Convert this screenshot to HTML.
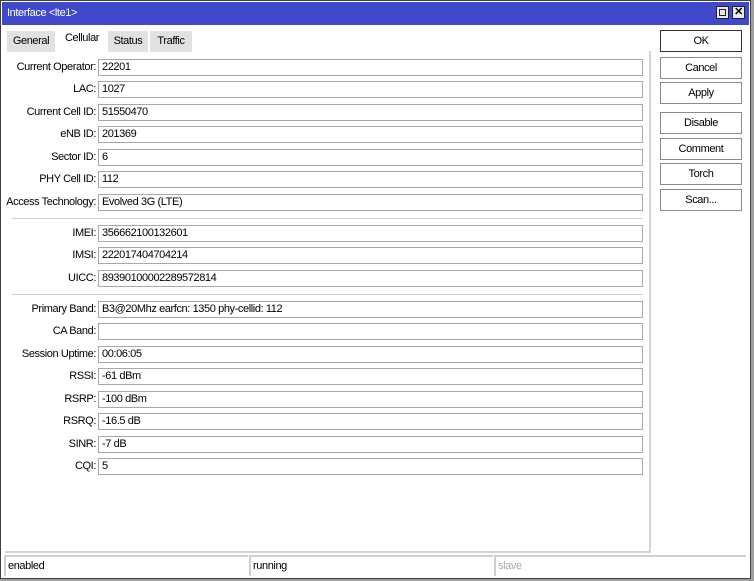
<!DOCTYPE html>
<html><head><style>
*{margin:0;padding:0;box-sizing:border-box}
body{width:754px;height:581px;background:#a0a0a0;font-family:"Liberation Sans",sans-serif;font-size:11px;letter-spacing:-0.4px;color:#000;position:relative;overflow:hidden}
.win{position:absolute;left:0;top:0;width:751px;height:579px;background:#fff;border:1px solid #404040}
.title{position:absolute;left:1px;top:1px;width:747px;height:23px;background:#3f49c9;color:#fff;font-size:11px;line-height:23px;padding-left:5px}
.tb{position:absolute;top:5px;width:13px;height:13px;background:#e8e8e8;border:1px solid #222}
.tabs{position:absolute;left:6px;top:30px;height:21px}
.tab{position:absolute;top:0;height:21px;background:#e1e1e1;line-height:21px;text-align:center}
.panel{position:absolute;left:5px;top:51px;width:646px;height:502px;border-right:2px solid #d4d4d4;border-bottom:2px solid #d4d4d4}
.l{position:absolute;right:658px;text-align:right;white-space:nowrap;line-height:17px}
.f{position:absolute;left:98px;width:545px;height:17px;border:1px solid #a8a8a8;line-height:15px;padding-left:3px;background:#fff}
.sep{position:absolute;left:12px;width:631px;height:1px;background:#d0d0d0}
.b{position:absolute;left:660px;width:82px;height:22px;border:1px solid #8a8a8a;background:#fff;text-align:center;line-height:20px}
.st{position:absolute;top:555px;height:21px;border-top:2px solid #d0d0d0;border-left:2px solid #d0d0d0;line-height:19px;padding-left:2px}
</style></head><body>
<div class="win">
<div class="title">Interface &lt;lte1&gt;</div>
<div class="tb" style="left:715px"><div style="position:absolute;left:2px;top:2px;width:7px;height:7px;border:1px solid #222"></div></div>
<div class="tb" style="left:731px;font-weight:bold;font-size:11px;line-height:11px;text-align:center">✕</div>
<div class="tabs">
<div class="tab" style="left:0;width:48px">General</div>
<div class="tab" style="left:50px;width:50px;background:#fff;top:-3px;height:24px;line-height:21px">Cellular</div>
<div class="tab" style="left:101px;width:40px">Status</div>
<div class="tab" style="left:143px;width:42px">Traffic</div>
</div>
</div>
<div class="panel"></div>
<div class="l" style="top:59px">Current Operator:</div><div class="f" style="top:59px">22201</div>
<div class="l" style="top:81px">LAC:</div><div class="f" style="top:81px">1027</div>
<div class="l" style="top:104px">Current Cell ID:</div><div class="f" style="top:104px">51550470</div>
<div class="l" style="top:126px">eNB ID:</div><div class="f" style="top:126px">201369</div>
<div class="l" style="top:149px">Sector ID:</div><div class="f" style="top:149px">6</div>
<div class="l" style="top:171px">PHY Cell ID:</div><div class="f" style="top:171px">112</div>
<div class="l" style="top:194px">Access Technology:</div><div class="f" style="top:194px">Evolved 3G (LTE)</div>
<div class="sep" style="top:218px"></div>
<div class="l" style="top:225px">IMEI:</div><div class="f" style="top:225px">356662100132601</div>
<div class="l" style="top:247px">IMSI:</div><div class="f" style="top:247px">222017404704214</div>
<div class="l" style="top:270px">UICC:</div><div class="f" style="top:270px">89390100002289572814</div>
<div class="sep" style="top:294px"></div>
<div class="l" style="top:301px">Primary Band:</div><div class="f" style="top:301px">B3@20Mhz earfcn: 1350 phy-cellid: 112</div>
<div class="l" style="top:323px">CA Band:</div><div class="f" style="top:323px"></div>
<div class="l" style="top:346px">Session Uptime:</div><div class="f" style="top:346px">00:06:05</div>
<div class="l" style="top:368px">RSSI:</div><div class="f" style="top:368px">-61 dBm</div>
<div class="l" style="top:391px">RSRP:</div><div class="f" style="top:391px">-100 dBm</div>
<div class="l" style="top:413px">RSRQ:</div><div class="f" style="top:413px">-16.5 dB</div>
<div class="l" style="top:436px">SINR:</div><div class="f" style="top:436px">-7 dB</div>
<div class="l" style="top:458px">CQI:</div><div class="f" style="top:458px">5</div>
<div class="b" style="top:30px;border-color:#333">OK</div>
<div class="b" style="top:57px">Cancel</div>
<div class="b" style="top:82px">Apply</div>
<div class="b" style="top:112px">Disable</div>
<div class="b" style="top:138px">Comment</div>
<div class="b" style="top:163px">Torch</div>
<div class="b" style="top:189px">Scan...</div>
<div class="st" style="left:4px;width:244px">enabled</div>
<div class="st" style="left:249px;width:244px">running</div>
<div class="st" style="left:494px;width:252px;color:#aaa">slave</div>
</body></html>
